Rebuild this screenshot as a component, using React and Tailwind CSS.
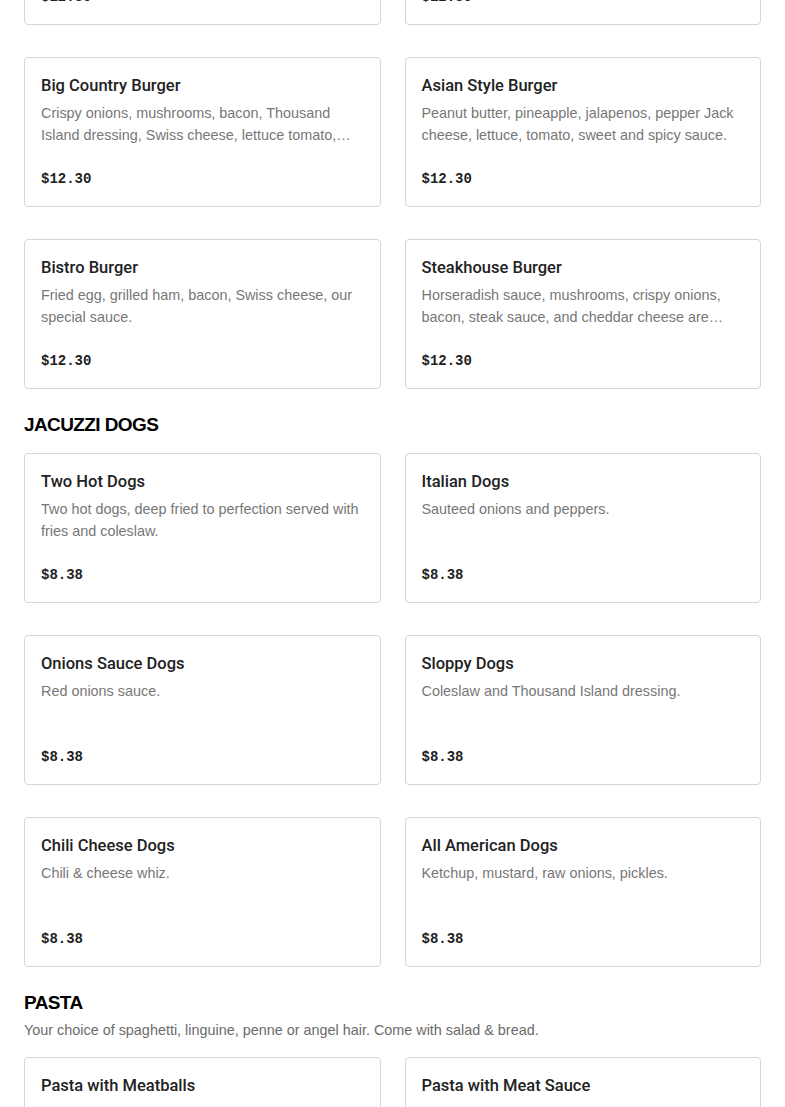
const burgers = [
  { name: "Mushroom Swiss Burger", desc: "Sauteed mushrooms, Swiss cheese, lettuce, tomato and mayo.", price: "$12.30" },
  { name: "Western Burger", desc: "Onion rings, BBQ sauce, bacon and cheddar cheese.", price: "$12.30" },
  { name: "Big Country Burger", desc: "Crispy onions, mushrooms, bacon, Thousand Island dressing, Swiss cheese, lettuce tomato, and pickles.", price: "$12.30" },
  { name: "Asian Style Burger", desc: "Peanut butter, pineapple, jalapenos, pepper Jack cheese, lettuce, tomato, sweet and spicy sauce.", price: "$12.30" },
  { name: "Bistro Burger", desc: "Fried egg, grilled ham, bacon, Swiss cheese, our special sauce.", price: "$12.30" },
  { name: "Steakhouse Burger", desc: "Horseradish sauce, mushrooms, crispy onions, bacon, steak sauce, and cheddar cheese are sandwiched together.", price: "$12.30" },
];

const dogs = [
  { name: "Two Hot Dogs", desc: "Two hot dogs, deep fried to perfection served with fries and coleslaw.", price: "$8.38" },
  { name: "Italian Dogs", desc: "Sauteed onions and peppers.", price: "$8.38" },
  { name: "Onions Sauce Dogs", desc: "Red onions sauce.", price: "$8.38" },
  { name: "Sloppy Dogs", desc: "Coleslaw and Thousand Island dressing.", price: "$8.38" },
  { name: "Chili Cheese Dogs", desc: "Chili & cheese whiz.", price: "$8.38" },
  { name: "All American Dogs", desc: "Ketchup, mustard, raw onions, pickles.", price: "$8.38" },
];

const pastas = [
  { name: "Pasta with Meatballs", desc: "Homemade meatballs with marinara sauce.", price: "$14.50" },
  { name: "Pasta with Meat Sauce", desc: "Classic bolognese meat sauce.", price: "$14.50" },
];

function Card({ item }) {
  return (
    <div className="h-[150px] rounded border border-[#d6d6d6] bg-white px-4 pt-4 flex flex-col">
      <h3 className="text-[16.5px] leading-6 font-medium text-[#222] font-['Roboto',sans-serif]">{item.name}</h3>
      <p className="mt-1 text-[14.4px] leading-[22px] text-[#777] line-clamp-2 min-h-[44px]">{item.desc}</p>
      <p className="mt-[22px] text-[14px] leading-[22px] font-bold text-[#222] font-['Liberation_Mono',monospace]">
        {item.price}
      </p>
    </div>
  );
}

function Grid({ items }) {
  return (
    <div className="grid grid-cols-2 gap-x-6 gap-y-8">
      {items.map((it) => (
        <Card key={it.name} item={it} />
      ))}
    </div>
  );
}

export default function App() {
  return (
    <div className="bg-white min-h-screen overflow-hidden font-['Liberation_Sans',Arial,sans-serif]">
      <div className="px-6 mt-[-125px]">
        {/* Burgers (continuação) */}
        <Grid items={burgers} />

        {/* Jacuzzi Dogs */}
        <h2 className="mt-6 mb-4 text-[19px] leading-6 font-black tracking-[-0.6px] text-black">JACUZZI DOGS</h2>
        <Grid items={dogs} />

        {/* Pasta */}
        <h2 className="mt-6 text-[19px] leading-6 font-black tracking-[-0.6px] text-black">PASTA</h2>
        <p className="mt-[4px] mb-4 text-[14.4px] leading-[22px] text-[#6b6b6b]">
          Your choice of spaghetti, linguine, penne or angel hair. Come with salad &amp; bread.
        </p>
        <Grid items={pastas} />
      </div>
    </div>
  );
}
